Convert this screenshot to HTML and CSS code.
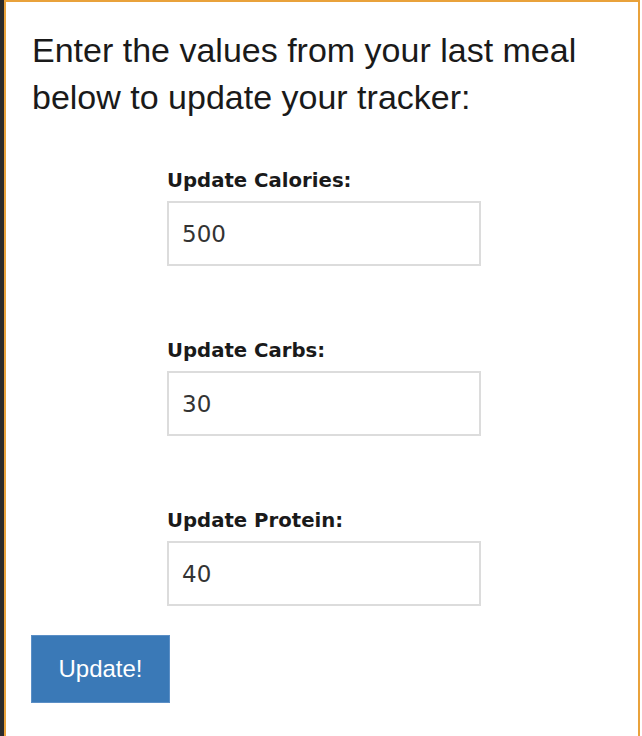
FILE: index.html
```html
<!DOCTYPE html>
<html>
<head>
<meta charset="utf-8">
<link rel="stylesheet" href="styles.css">
</head>
<body>
<div class="frame">
  <div class="panel">
    <p class="intro">Enter the values from your last meal below to update your tracker:</p>
    <form class="form">
      <div class="group">
        <label class="label" for="cal">Update Calories:</label>
        <input class="field" id="cal" type="text" value="500">
      </div>
      <div class="group">
        <label class="label" for="carb">Update Carbs:</label>
        <input class="field" id="carb" type="text" value="30">
      </div>
      <div class="group">
        <label class="label" for="prot">Update Protein:</label>
        <input class="field" id="prot" type="text" value="40">
      </div>
      <button class="btn" type="button">Update!</button>
    </form>
  </div>
</div>
</body>
</html>
```
FILE: styles.css
```css
html, body {
  margin: 0;
  padding: 0;
  background: #ffffff;
  height: 100%;
}
.frame {
  border-left: 4px solid #2b2b2b;
  height: 736px;
  box-sizing: border-box;
  width: 642px;
  overflow: hidden;
}
.panel {
  width: 636px;
  height: 100%;
  box-sizing: border-box;
  border: 2px solid #e9a23b;
  border-bottom: none;
  background: #fff;
}
.intro {
  margin: 25px 0 0 26px;
  font-family: "Liberation Sans", Arial, sans-serif;
  font-size: 34px;
  line-height: 47px;
  color: #1a1a1a;
  width: 590px;
}
.form {
  display: flex;
  flex-direction: column;
  margin-top: 48px;
}
.group {
  width: 314px;
  align-self: center;
  margin-left: 4px;
  display: flex;
  flex-direction: column;
  margin-bottom: 73px;
}
.group:last-of-type {
  margin-bottom: 29px;
}
.label {
  font-family: "DejaVu Sans", sans-serif;
  font-weight: 700;
  font-size: 19.7px;
  line-height: 24px;
  color: #1a1a1a;
  margin-bottom: 8px;
}
.field {
  box-sizing: border-box;
  height: 65px;
  width: 314px;
  border: 2px solid #dcdcdc;
  padding: 0 13px;
  font-family: "DejaVu Sans", sans-serif;
  font-size: 23px;
  color: #333;
  background: #fff;
  outline: none;
}
.btn {
  align-self: flex-start;
  margin-left: 25px;
  width: 139px;
  height: 68px;
  border: 1px solid #5b8fc6;
  background: #3a79b7;
  color: #fff;
  font-family: "Liberation Sans", Arial, sans-serif;
  font-size: 24px;
  padding: 0;
}
```
